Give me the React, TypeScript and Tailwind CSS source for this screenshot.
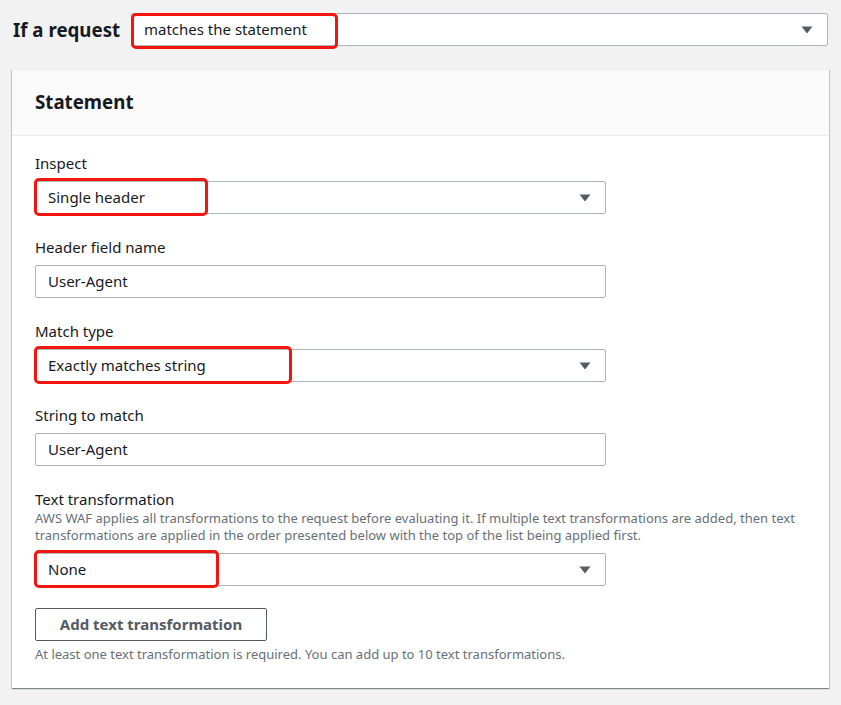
import React from "react";

function Arrow() {
  return (
    <svg width="12" height="8" viewBox="0 0 12 8" className="shrink-0">
      <path d="M0.5 0.5 L11.5 0.5 L6 7.5 Z" fill="#545b64" />
    </svg>
  );
}

function Highlight({ w, top = -4, h = 38 }: { w: number; top?: number; h?: number }) {
  return (
    <div
      className="pointer-events-none absolute left-[-2px] rounded-[5px] border-[3px] border-[#f5150f]"
      style={{ width: w, top, height: h }}
    />
  );
}

function Select({ value, hl }: { value: string; hl: number }) {
  return (
    <div className="relative flex h-[33px] w-[571px] items-center justify-between rounded-[2px] border border-[#aab7b8] bg-white pl-[12px] pr-[14px]">
      <span className="text-[15px] text-[#16191f]">{value}</span>
      <Arrow />
      <Highlight w={hl} />
    </div>
  );
}

function Input({ value }: { value: string }) {
  return (
    <div className="flex h-[33px] w-[571px] items-center rounded-[2px] border border-[#aab7b8] bg-white pl-[12px]">
      <span className="text-[15px] text-[#16191f]">{value}</span>
    </div>
  );
}

function Label({ children }: { children: React.ReactNode }) {
  return <div className="mb-[8px] h-[20px] text-[15px] leading-[20px] text-[#16191f]">{children}</div>;
}

export default function App() {
  return (
    <div
      className="min-h-[705px] bg-[#f2f2f2] pt-[13px]"
      style={{ fontFamily: '"Noto Sans", "Open Sans", sans-serif' }}
    >
      <div className="flex items-center pl-[13px] pr-[13px]">
        <div className="w-[118px] text-[18.7px] font-bold leading-[33px] text-[#16191f]">If a request</div>
        <div className="relative flex h-[33px] flex-1 items-center justify-between rounded-[2px] border border-[#aab7b8] bg-white pl-[12px] pr-[14px]">
          <span className="text-[15px] text-[#16191f]">matches the statement</span>
          <Arrow />
          <div className="pointer-events-none absolute left-[-1px] top-[-1px] h-[36px] w-[207px] rounded-[5px] border-[3px] border-[#f5150f]" />
        </div>
      </div>

      <div className="mx-[12px] mt-[23px] w-[817px] border-t border-[#eaeded] bg-white shadow-[0_1px_1px_0_rgba(0,28,36,0.3),1px_1px_1px_0_rgba(0,28,36,0.15),-1px_1px_1px_0_rgba(0,28,36,0.15)]">
        <div className="flex h-[66px] items-center border-b border-[#eaeded] bg-[#fafafa] pl-[23px]">
          <span className="text-[18.7px] font-bold text-[#16191f]">Statement</span>
        </div>
        <div className="flex flex-col gap-[23px] pl-[23px] pr-[23px] pt-[17px] pb-[25px]">
          <div>
            <Label>Inspect</Label>
            <Select value="Single header" hl={174} />
          </div>
          <div>
            <Label>Header field name</Label>
            <Input value="User-Agent" />
          </div>
          <div>
            <Label>Match type</Label>
            <Select value="Exactly matches string" hl={258} />
          </div>
          <div>
            <Label>String to match</Label>
            <Input value="User-Agent" />
          </div>
          <div>
            <div className="h-[20px] text-[15px] leading-[20px] text-[#16191f]">Text transformation</div>
            <div className="mb-[9px] mt-[1px] text-[13px] leading-[17px] text-[#687078]">
              AWS WAF applies all transformations to the request before evaluating it. If multiple text transformations are added, then text transformations are applied in the order presented below with the top of the list being applied first.
            </div>
            <Select value="None" hl={185} />
            <button className="mt-[22px] flex h-[33px] w-[232px] items-center justify-center rounded-[2px] border border-[#545b64] bg-white text-[15px] font-bold text-[#545b64]">
              Add text transformation
            </button>
            <div className="mt-[5px] text-[13px] leading-[17px] text-[#687078]">
              At least one text transformation is required. You can add up to 10 text transformations.
            </div>
          </div>
        </div>
      </div>
    </div>
  );
}
